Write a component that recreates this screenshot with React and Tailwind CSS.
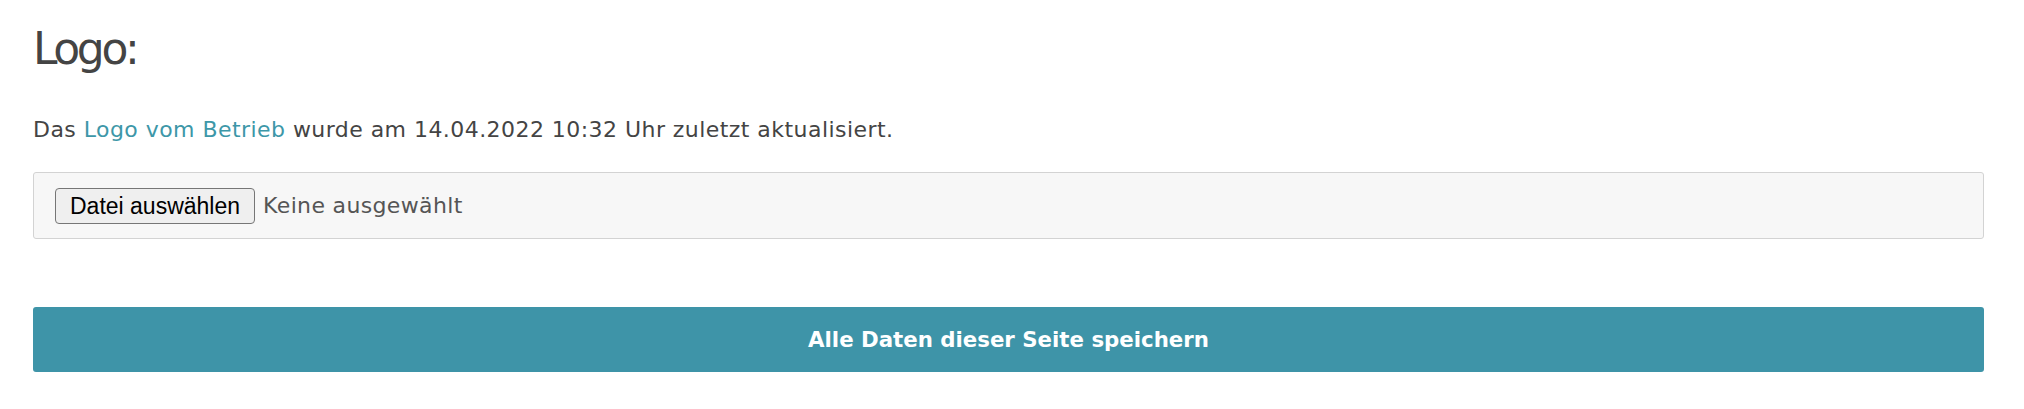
import React from 'react'

const App = () => {
  return (
    <div className="w-[2024px] h-[409px] bg-white pl-[33px] pr-[40px] pt-[23px]" style={{ fontFamily: '"DejaVu Sans", sans-serif' }}>
      <h1 className="text-[44px] leading-[52px] tracking-[-3.4px] text-[#444444] font-normal">Logo:</h1>

      <p className="mt-[41px] text-[22px] leading-[28px] tracking-[0.45px] text-[#444444]">
        Das <a href="#" className="text-[#3d97a8]">Logo vom Betrieb</a> wurde am 14.04.2022 10:32 Uhr zuletzt aktualisiert.
      </p>

      <div className="mt-[28px] h-[67px] flex items-center px-[21px] bg-[#f7f7f7] border border-[#d3d3d3] rounded-[3px]">
        <button
          className="h-[36px] px-[14px] bg-[#efefef] border border-[#767676] rounded-[4px] text-[23px] text-black"
          style={{ fontFamily: '"Liberation Sans", Arial, sans-serif' }}
        >
          Datei auswählen
        </button>
        <span className="ml-[8px] text-[22px] tracking-[0.35px] text-[#555555]">Keine ausgewählt</span>
      </div>

      <button className="mt-[68px] w-full h-[65px] bg-[#3e94a8] rounded-[3px] text-white font-bold text-[21.3px]">
        Alle Daten dieser Seite speichern
      </button>
    </div>
  )
}

export default App
